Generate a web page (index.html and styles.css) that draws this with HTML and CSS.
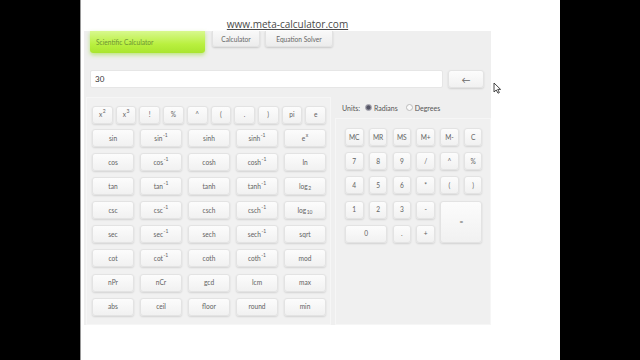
FILE: index.html
```html
<!DOCTYPE html>
<html>
<head>
<meta charset="utf-8">
<link rel="stylesheet" href="styles.css">
</head>
<body>
<div class="page">
  <div class="url"><span>www.meta-calculator.com</span></div>
  <div class="panel">
    <div class="tabs">
      <div class="tab tab-active">Scientific Calculator</div>
      <div class="tab tab-calc">Calculator</div>
      <div class="tab tab-eq">Equation Solver</div>
    </div>
    <div class="inputrow">
      <div class="display">30</div>
      <div class="btn back">&larr;</div>
    </div>
    <div class="work">
      <div class="leftbox">
        <div class="smallrow">
          <div class="btn">x<sup>2</sup></div>
          <div class="btn">x<sup>3</sup></div>
          <div class="btn">!</div>
          <div class="btn">%</div>
          <div class="btn">^</div>
          <div class="btn">(</div>
          <div class="btn">.</div>
          <div class="btn">)</div>
          <div class="btn">pi</div>
          <div class="btn">e</div>
        </div>
        <div class="funcs">
          <div class="btn">sin</div><div class="btn">sin<sup>-1</sup></div><div class="btn">sinh</div><div class="btn">sinh<sup>-1</sup></div><div class="btn">e<sup>x</sup></div>
          <div class="btn">cos</div><div class="btn">cos<sup>-1</sup></div><div class="btn">cosh</div><div class="btn">cosh<sup>-1</sup></div><div class="btn">ln</div>
          <div class="btn">tan</div><div class="btn">tan<sup>-1</sup></div><div class="btn">tanh</div><div class="btn">tanh<sup>-1</sup></div><div class="btn">log<sub>2</sub></div>
          <div class="btn">csc</div><div class="btn">csc<sup>-1</sup></div><div class="btn">csch</div><div class="btn">csch<sup>-1</sup></div><div class="btn">log<sub>10</sub></div>
          <div class="btn">sec</div><div class="btn">sec<sup>-1</sup></div><div class="btn">sech</div><div class="btn">sech<sup>-1</sup></div><div class="btn">sqrt</div>
          <div class="btn">cot</div><div class="btn">cot<sup>-1</sup></div><div class="btn">coth</div><div class="btn">coth<sup>-1</sup></div><div class="btn">mod</div>
          <div class="btn">nPr</div><div class="btn">nCr</div><div class="btn">gcd</div><div class="btn">lcm</div><div class="btn">max</div>
          <div class="btn">abs</div><div class="btn">ceil</div><div class="btn">floor</div><div class="btn">round</div><div class="btn">min</div>
        </div>
      </div>
      <div class="rightcol">
        <div class="units">
          <span>Units:</span>
          <span class="radio on"></span><span>Radians</span>
          <span class="radio"></span><span>Degrees</span>
        </div>
        <div class="rightbox">
          <div class="pad">
            <div class="btn">MC</div><div class="btn">MR</div><div class="btn">MS</div><div class="btn">M+</div><div class="btn">M-</div><div class="btn">C</div>
            <div class="btn">7</div><div class="btn">8</div><div class="btn">9</div><div class="btn">/</div><div class="btn">^</div><div class="btn">%</div>
            <div class="btn">4</div><div class="btn">5</div><div class="btn">6</div><div class="btn">*</div><div class="btn">(</div><div class="btn">)</div>
            <div class="btn">1</div><div class="btn">2</div><div class="btn">3</div><div class="btn">-</div><div class="btn eq">=</div>
            <div class="btn zero">0</div><div class="btn">.</div><div class="btn">+</div>
          </div>
        </div>
      </div>
    </div>
  </div>
  <svg class="cursor" width="9" height="12" viewBox="0 0 9 12"><path d="M1 1 L1 10 L3.2 8 L5 11.2 L6.4 10.5 L4.7 7.4 L7.6 7.4 Z" fill="#fff" stroke="#333" stroke-width="0.9" stroke-linejoin="round"/></svg>
</div>
</body>
</html>
```

FILE: styles.css
```css
html, body {
  margin: 0;
  padding: 0;
}
body {
  background: #000;
  width: 640px;
  height: 360px;
  overflow: hidden;
  font-family: Lato, "Open Sans", sans-serif;
}
.page {
  position: relative;
  margin-left: 80px;
  width: 479px;
  height: 360px;
  background: #fff;
  border-left: 1px solid #9a9a9a;
}
.url {
  margin-left: 3px;
  width: 407px;
  height: 31px;
  box-sizing: border-box;
  padding-top: 18px;
  text-align: center;
  font-family: "Open Sans", sans-serif;
  font-size: 10px;
  line-height: 12px;
  color: #4a4a4a;
}
.url span {
  text-decoration: underline;
}
.panel {
  margin-left: 3px;
  width: 407px;
  height: 294px;
  background: #efefef;
  display: flex;
  flex-direction: column;
}
.tabs {
  display: flex;
  align-items: flex-start;
  height: 22px;
}
.tab {
  box-sizing: border-box;
  font-size: 6.6px;
  color: #666;
  display: flex;
  align-items: center;
  border-radius: 0 0 3px 3px;
}
.tab-active {
  margin-left: 6px;
  width: 115px;
  height: 22px;
  padding-left: 6px;
  color: #6c9434;
  background: linear-gradient(#d8f88e, #b9f03f 60%, #a9e52e);
  box-shadow: 0 2px 4px rgba(150, 220, 40, 0.55);
}
.tab-calc, .tab-eq {
  height: 16px;
  justify-content: center;
  background: linear-gradient(#f9f9f9, #ececec);
  box-shadow: 0 1px 2px rgba(0, 0, 0, 0.16);
  border: 1px solid #e2e2e2;
  border-top: none;
}
.tab-calc {
  margin-left: 7px;
  width: 48px;
}
.tab-eq {
  margin-left: 5px;
  width: 68px;
}
.inputrow {
  display: flex;
  margin-top: 17px;
  margin-left: 6px;
  gap: 5px;
}
.display {
  box-sizing: border-box;
  width: 353px;
  height: 18px;
  background: #fff;
  border: 1px solid #e6e6e6;
  border-radius: 2px;
  font-size: 8px;
  color: #333;
  padding-left: 4px;
  display: flex;
  align-items: center;
}
.btn {
  box-sizing: border-box;
  height: 18px;
  background: linear-gradient(#fcfcfc, #f1f1f1);
  border: 1px solid #e3e3e3;
  border-radius: 3px;
  box-shadow: 0 1px 2px rgba(0, 0, 0, 0.13);
  display: flex;
  align-items: center;
  justify-content: center;
  font-size: 6.6px;
  color: #626262;
  line-height: 1;
}
.btn sup, .btn sub {
  font-size: 5px;
  position: relative;
  vertical-align: baseline;
  margin-left: 0.5px;
}
.btn sup { top: -3px; }
.btn sub { top: 2px; }
.back {
  width: 36px;
  font-size: 9px;
  color: #666;
}
.work {
  display: flex;
  margin-top: 9px;
  flex: 1;
}
.leftbox {
  margin-left: 2px;
  width: 245px;
  box-sizing: border-box;
  padding: 8px 0 0 5px;
  background: #f1f1f1;
  border: 1px solid #f6f6f6;
}
.smallrow {
  display: grid;
  grid-template-columns: repeat(10, 1fr);
  column-gap: 3px;
  width: 234px;
}
.smallrow .btn {
  height: 17.5px;
}
.funcs {
  margin-top: 5.5px;
  display: grid;
  grid-template-columns: repeat(5, 42px);
  grid-auto-rows: 18px;
  column-gap: 6px;
  row-gap: 6.1px;
}
.rightcol {
  margin-left: 4px;
  width: 156px;
  display: flex;
  flex-direction: column;
}
.units {
  height: 21px;
  display: flex;
  align-items: center;
  padding-left: 7px;
  font-size: 7px;
  color: #555;
  gap: 2px;
}
.units span:nth-child(4) {
  margin-left: 6px;
}
.radio {
  width: 5px;
  height: 5px;
  border-radius: 50%;
  border: 1px solid #bbb;
  background: #fafafa;
  margin-left: 3px;
}
.radio.on {
  background: radial-gradient(circle, #556 45%, #8a8a95 70%);
  border-color: #9a9aa5;
}
.rightbox {
  flex: 1;
  background: #f0f0f0;
  border: 1px solid #f6f6f6;
  box-sizing: border-box;
  padding: 9px 0 0 9px;
}
.pad {
  display: grid;
  grid-template-columns: repeat(6, 18.5px);
  grid-auto-rows: 18px;
  column-gap: 5.3px;
  row-gap: 6.2px;
}
.pad .btn {
  border-radius: 3px;
}
.eq {
  grid-column: 5 / span 2;
  grid-row: 4 / span 2;
  height: auto;
}
.zero {
  grid-column: 1 / span 2;
}
.cursor {
  position: absolute;
  left: 412px;
  top: 82px;
}
```
